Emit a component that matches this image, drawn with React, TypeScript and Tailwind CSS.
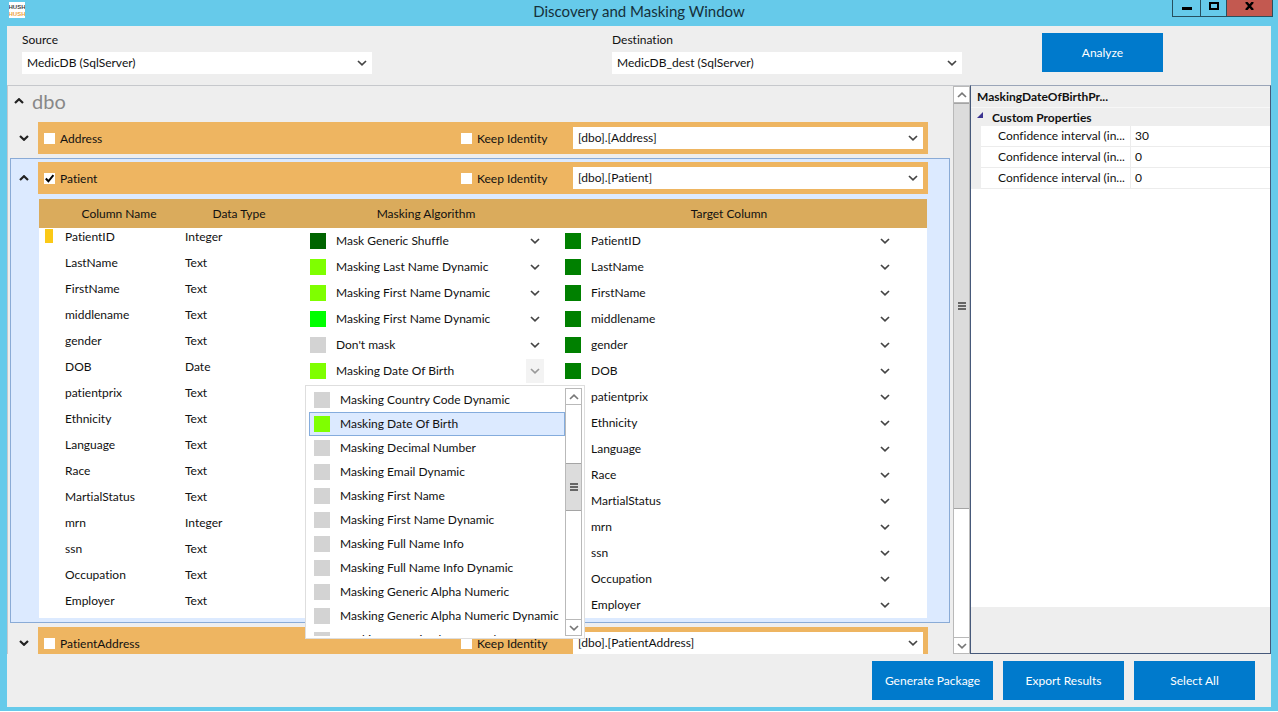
import { useState } from "react";
import type { ReactNode } from "react";

const GREEN = "bg-[#008000]";
const GRAY = "bg-[#d3d3d3]";
const LIME = "bg-[#7fff00]";

type Column = { name: string; type: string; algorithm: string; color: string };

const columns: Column[] = [
  { name: "PatientID", type: "Integer", algorithm: "Mask Generic Shuffle", color: "bg-[#006400]" },
  { name: "LastName", type: "Text", algorithm: "Masking Last Name Dynamic", color: LIME },
  { name: "FirstName", type: "Text", algorithm: "Masking First Name Dynamic", color: LIME },
  { name: "middlename", type: "Text", algorithm: "Masking First Name Dynamic", color: "bg-[#00ff00]" },
  { name: "gender", type: "Text", algorithm: "Don't mask", color: GRAY },
  { name: "DOB", type: "Date", algorithm: "Masking Date Of Birth", color: LIME },
  { name: "patientprix", type: "Text", algorithm: "Don't mask", color: GRAY },
  { name: "Ethnicity", type: "Text", algorithm: "Don't mask", color: GRAY },
  { name: "Language", type: "Text", algorithm: "Don't mask", color: GRAY },
  { name: "Race", type: "Text", algorithm: "Don't mask", color: GRAY },
  { name: "MartialStatus", type: "Text", algorithm: "Don't mask", color: GRAY },
  { name: "mrn", type: "Integer", algorithm: "Don't mask", color: GRAY },
  { name: "ssn", type: "Text", algorithm: "Don't mask", color: GRAY },
  { name: "Occupation", type: "Text", algorithm: "Don't mask", color: GRAY },
  { name: "Employer", type: "Text", algorithm: "Don't mask", color: GRAY },
];

const algorithms = [
  "Masking Country Code Dynamic",
  "Masking Date Of Birth",
  "Masking Decimal Number",
  "Masking Email Dynamic",
  "Masking First Name",
  "Masking First Name Dynamic",
  "Masking Full Name Info",
  "Masking Full Name Info Dynamic",
  "Masking Generic Alpha Numeric",
  "Masking Generic Alpha Numeric Dynamic",
  "Masking Generic Phone Number",
];

const properties = [
  { name: "Confidence interval (in...", value: "30" },
  { name: "Confidence interval (in...", value: "0" },
  { name: "Confidence interval (in...", value: "0" },
];

function Chevron({ up = false, className = "text-[#444]", bold = false }: { up?: boolean; className?: string; bold?: boolean }) {
  return (
    <svg viewBox="0 0 10 6" className={`h-1.5 w-2.5 shrink-0 ${className}`} fill="none" stroke="currentColor" strokeWidth={bold ? 2.2 : 1.7} aria-hidden="true">
      <path d={up ? "M1 5 5 1.2 9 5" : "M1 1 5 4.8 9 1"} />
    </svg>
  );
}

function ComboBox({ id, label, value }: { id?: string; label?: string; value: string }) {
  return (
    <div className="grid h-full items-center bg-white">
      <select id={id} aria-label={label} className="col-start-1 row-start-1 h-full w-full appearance-none bg-transparent pl-[5px] pr-6 text-xs outline-none">
        <option>{value}</option>
      </select>
      <span className="pointer-events-none col-start-1 row-start-1 justify-self-end pr-[5px]">
        <Chevron />
      </span>
    </div>
  );
}

function SwatchCombo({ label, value, color, active = false, arrow }: { label: string; value: string; color: string; active?: boolean; arrow: string }) {
  return (
    <div className="flex h-[26px] items-center">
      <span className={`size-4 shrink-0 ${color}`} />
      <div className="grid h-6 min-w-0 flex-1 items-center">
        <select aria-label={label} className="col-start-1 row-start-1 h-full w-full appearance-none bg-transparent pl-2.5 text-xs outline-none">
          <option>{value}</option>
        </select>
        <span className={`pointer-events-none col-start-1 row-start-1 flex h-6 w-[18px] items-center justify-center justify-self-end ${arrow} ${active ? "bg-[#f3f3f3]" : ""}`}>
          <Chevron className={active ? "text-[#999]" : "text-[#444]"} />
        </span>
      </div>
    </div>
  );
}

function CheckBox({ label, initial = false, className }: { label: string; initial?: boolean; className: string }) {
  const [checked, setChecked] = useState(initial);
  return (
    <label className={`flex items-center gap-[5px] ${className}`}>
      <span className="grid place-items-center">
        <input type="checkbox" checked={checked} onChange={(e) => setChecked(e.target.checked)} className="col-start-1 row-start-1 size-[11px] appearance-none bg-white" />
        {checked && (
          <svg viewBox="0 0 11 11" className="pointer-events-none col-start-1 row-start-1 size-[11px]" fill="none" stroke="#000" strokeWidth="2" aria-hidden="true">
            <path d="M1.8 5.5 4.4 8.3 9.4 2.2" />
          </svg>
        )}
      </span>
      <span className="pt-0.5">{label}</span>
    </label>
  );
}

function TableBar({ name, open = false, checked = false }: { name: string; open?: boolean; checked?: boolean }) {
  return (
    <div className="flex">
      <button type="button" aria-label={`Toggle ${name}`} className="flex w-7 shrink-0 items-center justify-center text-[#222]">
        <Chevron up={open} bold className="text-[#222]" />
      </button>
      <div className="grid h-8 flex-1 grid-cols-[418px_112px_minmax(0,1fr)] items-center bg-[#eeb561] px-[5px]">
        <CheckBox label={name} initial={checked} className="pl-px" />
        <CheckBox label="Keep Identity" className="" />
        <div className="h-[22px]">
          <ComboBox label={`Destination table for ${name}`} value={`[dbo].[${name}]`} />
        </div>
      </div>
    </div>
  );
}

function Grip() {
  return (
    <span className="flex w-2 flex-col gap-px">
      <span className="h-0.5 bg-[#666]" />
      <span className="h-0.5 bg-[#666]" />
      <span className="h-0.5 bg-[#666]" />
    </span>
  );
}

function ScrollBar({ children }: { children: ReactNode }) {
  return (
    <div className="flex w-[17px] shrink-0 flex-col border border-[#b9b9b9] bg-white">
      <button type="button" aria-label="Scroll up" className="flex h-4 shrink-0 items-center justify-center border-b border-[#b9b9b9]">
        <Chevron up className="text-[#777]" />
      </button>
      <div className="flex min-h-0 flex-1 flex-col">{children}</div>
      <button type="button" aria-label="Scroll down" className="flex h-4 shrink-0 items-center justify-center border-t border-[#b9b9b9]">
        <Chevron className="text-[#777]" />
      </button>
    </div>
  );
}

function AlgorithmMenu() {
  const [selected, setSelected] = useState("Masking Date Of Birth");
  return (
    <div className="absolute left-1.5 top-[27px] z-10 flex h-[254px] w-[280px] border border-[#dedede] bg-white py-0.5 pl-[3px] pr-0.5">
      <ul role="listbox" aria-label="Masking algorithms" className="h-[248px] min-w-0 flex-1 overflow-hidden">
        {algorithms.map((name) => (
          <li
            key={name}
            role="option"
            aria-selected={name === selected}
            onClick={() => setSelected(name)}
            className={`flex h-6 items-center gap-2.5 whitespace-nowrap border pl-1 ${name === selected ? "border-[#84acdd] bg-[#dceaff]" : "border-transparent"}`}
          >
            <span className={`size-4 shrink-0 ${name === selected ? LIME : GRAY}`} />
            {name}
          </li>
        ))}
      </ul>
      <ScrollBar>
        <div className="h-[27%]" />
        <div className="flex h-12 items-center justify-center border-y border-[#a5a5a5] bg-[#dcdcdc]">
          <Grip />
        </div>
      </ScrollBar>
    </div>
  );
}

function ColumnTable() {
  return (
    <table className="w-full table-fixed border-collapse bg-white">
      <colgroup>
        <col className="w-5" />
        <col className="w-[120px]" />
        <col className="w-[120px]" />
        <col className="w-[254px]" />
        <col />
        <col className="w-[22px]" />
      </colgroup>
      <thead>
        <tr className="h-[29px] bg-[#daab5c]">
          <td />
          <th className="font-normal">Column Name</th>
          <th className="font-normal">Data Type</th>
          <th className="font-normal">Masking Algorithm</th>
          <th className="font-normal">Target Column</th>
          <td />
        </tr>
      </thead>
      <tbody>
        {columns.map((column, i) => (
          <tr key={column.name} className="h-[26px] align-top leading-[18px]">
            <td className="pl-1.5 pt-px">{i === 0 && <span className="block h-3.5 w-2 bg-[#fbc916]" />}</td>
            <td className="p-0 pl-1.5">{column.name}</td>
            <td className="p-0 pl-1.5">{column.type}</td>
            <td className="relative p-0 pl-[11px]">
              <SwatchCombo label={`Masking algorithm for ${column.name}`} value={column.algorithm} color={column.color} active={column.name === "DOB"} arrow="mr-[9px]" />
              {column.name === "DOB" && <AlgorithmMenu />}
            </td>
            <td className="p-0 pl-3">
              <SwatchCombo label={`Target column for ${column.name}`} value={column.name} color={GREEN} arrow="mr-[11px]" />
            </td>
            <td />
          </tr>
        ))}
      </tbody>
    </table>
  );
}

function ActionButton({ children }: { children: ReactNode }) {
  return (
    <button type="button" className="h-[39px] w-[121px] bg-[#007acc] text-xs text-white">
      {children}
    </button>
  );
}

function TitleBar() {
  return (
    <header className="grid h-[26px] shrink-0 grid-cols-[1fr_auto_1fr] items-start">
      <svg viewBox="0 0 16 16" className="ml-[9px] mt-0.5 size-4 bg-white" role="img" aria-label="Logo">
        <text x="8" y="7" textAnchor="middle" fontFamily="Liberation Sans Narrow, Liberation Sans, sans-serif" fontSize="6" fontWeight="bold" fill="#444">HUSH</text>
        <text x="8" y="14" textAnchor="middle" fontFamily="Liberation Sans Narrow, Liberation Sans, sans-serif" fontSize="6" fontWeight="bold" fill="#eda23d">HUSH</text>
      </svg>
      <h1 className="text-[15px] leading-[22px] text-[#15303a]">Discovery and Masking Window</h1>
      <div className="mr-[5px] flex h-[17px] justify-self-end border border-t-0 border-[#27505f]">
        <button type="button" aria-label="Minimize" className="flex w-7 justify-center border-r border-[#27505f]">
          <span className="mt-[7px] h-[3px] w-2.5 bg-black" />
        </button>
        <button type="button" aria-label="Maximize" className="flex w-[26px] justify-center border-r border-[#27505f]">
          <span className="mt-0.5 h-2 w-2.5 border-2 border-black" />
        </button>
        <button type="button" aria-label="Close" className="flex w-[45px] justify-center bg-[#c35950]">
          <svg viewBox="0 0 9 8" className="mt-0.5 h-2 w-[9px]" stroke="#000" strokeWidth="2.4" aria-hidden="true">
            <path d="M1 0 8 8M8 0 1 8" />
          </svg>
        </button>
      </div>
    </header>
  );
}

function PropertyPanel() {
  return (
    <aside className="flex w-[301px] shrink-0 flex-col border border-[#46597a] border-t-[#9aa5b8] bg-[#eee]">
      <div className="flex-1 bg-white">
        <h2 className="h-[22px] border-b border-[#f7f7f7] bg-[#eee] pl-1.5 font-bold leading-[22px]">MaskingDateOfBirthPr...</h2>
        <div className="flex h-[18px] items-center bg-[#eee] pl-1.5">
          <svg viewBox="0 0 6 6" className="mb-1 size-1.5" aria-hidden="true">
            <path d="M6 0V6H0Z" fill="#3b3390" />
          </svg>
          <h3 className="pl-[9px] pt-0.5 font-bold">Custom Properties</h3>
        </div>
        <table className="w-full table-fixed border-separate border-spacing-0">
          <colgroup>
            <col className="w-2.5" />
            <col className="w-[150px]" />
            <col />
          </colgroup>
          <tbody>
            {properties.map((property, i) => (
              <tr key={i} className="h-[21px]">
                <td className="bg-[#eee] p-0" />
                <th className="whitespace-nowrap border-b border-r border-[#ececec] p-0 pl-[17px] text-left font-normal">{property.name}</th>
                <td className="border-b border-[#ececec] p-0 pl-1">{property.value}</td>
              </tr>
            ))}
          </tbody>
        </table>
      </div>
      <div className="h-[46px] shrink-0" />
    </aside>
  );
}

export default function App() {
  return (
    <div className="flex h-screen min-h-[480px] flex-col overflow-hidden border-b border-white bg-[#66caea] font-['Lato','Open_Sans',sans-serif] text-xs text-[#111] [font-variant-ligatures:none]">
      <TitleBar />
      <div className="mx-[7px] mb-1 flex min-h-0 flex-1 flex-col bg-[#eee]">
        <div className="flex h-[59px] shrink-0 items-start pl-[15px]">
          <div className="flex w-[590px] flex-col pt-1.5">
            <label htmlFor="source" className="h-5 leading-4">Source</label>
            <div className="h-[22px] w-[350px]">
              <ComboBox id="source" value="MedicDB (SqlServer)" />
            </div>
          </div>
          <div className="flex w-[430px] flex-col pt-1.5">
            <label htmlFor="destination" className="h-5 leading-4">Destination</label>
            <div className="h-[22px] w-[350px]">
              <ComboBox id="destination" value="MedicDB_dest (SqlServer)" />
            </div>
          </div>
          <div className="pt-[7px]">
            <ActionButton>Analyze</ActionButton>
          </div>
        </div>

        <main className="flex min-h-0 flex-1">
          <div className="flex min-w-0 flex-1 border-l border-t border-[#c6c8cc]">
            <div className="min-w-0 flex-1 overflow-hidden">
              <div className="flex h-9 items-start">
                <button type="button" aria-label="Toggle dbo" className="flex h-[30px] w-[21px] items-center justify-center">
                  <Chevron up bold className="text-[#222]" />
                </button>
                <h2 className="pl-[3px] text-xl leading-[30px] text-[#888]">dbo</h2>
              </div>
              <div className="pl-0.5 pr-[3px]">
                <div className="pr-[22px]">
                  <TableBar name="Address" />
                </div>
                <section className="mt-1 border border-[#8aabd6] bg-[#dceaff] pb-1 pr-[21px] pt-[3px]">
                  <div className="-ml-px">
                    <TableBar name="Patient" open checked />
                  </div>
                  <div className="ml-7 mr-px mt-[5px]">
                    <ColumnTable />
                  </div>
                </section>
                <div className="mt-1 pr-[22px]">
                  <TableBar name="PatientAddress" />
                </div>
              </div>
            </div>
            <ScrollBar>
              <div className="flex h-[76%] items-center justify-center border-y border-[#a5a5a5] bg-[#dcdcdc]">
                <Grip />
              </div>
            </ScrollBar>
          </div>
          <PropertyPanel />
        </main>

        <footer className="flex h-[53px] shrink-0 items-start justify-end gap-2.5 pr-4 pt-[7px]">
          <ActionButton>Generate Package</ActionButton>
          <ActionButton>Export Results</ActionButton>
          <ActionButton>Select All</ActionButton>
        </footer>
      </div>
    </div>
  );
}
